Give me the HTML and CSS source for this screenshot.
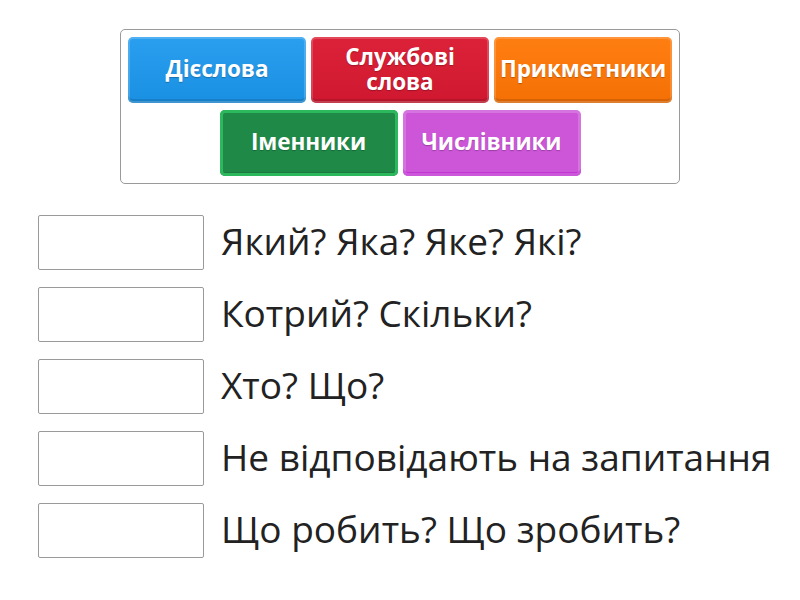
FILE: index.html
```html
<!DOCTYPE html>
<html lang="uk">
<head>
<meta charset="utf-8">
<link rel="stylesheet" href="styles.css">
</head>
<body>
<div class="bank">
  <div class="tile blue">Дієслова</div>
  <div class="tile red">Службові слова</div>
  <div class="tile orange">Прикметники</div>
  <div class="tile green">Іменники</div>
  <div class="tile purple">Числівники</div>
</div>
<div class="list">
  <div class="row"><div class="slot"></div><div class="label">Який? Яка? Яке? Які?</div></div>
  <div class="row"><div class="slot"></div><div class="label">Котрий? Скільки?</div></div>
  <div class="row"><div class="slot"></div><div class="label">Хто? Що?</div></div>
  <div class="row"><div class="slot"></div><div class="label">Не відповідають на запитання</div></div>
  <div class="row"><div class="slot"></div><div class="label">Що робить? Що зробить?</div></div>
</div>
</body>
</html>
```
FILE: styles.css
```css
html, body {
  margin: 0;
  padding: 0;
  background: #fff;
  font-family: "Open Sans", "Noto Sans", sans-serif;
}
.bank {
  box-sizing: border-box;
  width: 560px;
  margin: 29px auto 0;
  padding: 7px 0;
  border: 1px solid #9a9a9a;
  border-radius: 5px;
  display: flex;
  flex-wrap: wrap;
  justify-content: center;
  gap: 7px 5px;
}
.tile {
  box-sizing: border-box;
  width: 178px;
  height: 66px;
  border-radius: 5px;
  display: flex;
  align-items: center;
  justify-content: center;
  text-align: center;
  padding: 0 4px 3px;
  color: #fff;
  font-weight: 700;
  font-size: 22.5px;
  line-height: 25px;
  letter-spacing: -0.1px;
  text-shadow: 0 1px 1px rgba(0,0,0,0.25);
  box-shadow: inset 0 0 0 2px rgba(255,255,255,0.18), inset 0 -4px 0 rgba(0,0,0,0.12);
}
.red { padding: 0 28px 3px; }
.blue { background: linear-gradient(#2a9ff0, #1a90e2); }
.red { background: linear-gradient(#dc2238, #cf1830); }
.orange { background: linear-gradient(#ff7e12, #f47004); }
.green { background: #1f8a48; box-shadow: inset 0 0 0 3px #2cb85d, inset 0 -4px 0 rgba(0,0,0,0.12); }
.purple { background: #cc55d8; box-shadow: inset 0 0 0 3px rgba(255,255,255,0.18), inset 0 -4px 0 #c133d2; }
.list {
  margin: 31px 0 0 38px;
  display: flex;
  flex-direction: column;
  gap: 17px;
}
.row {
  display: flex;
  align-items: center;
  gap: 17px;
}
.slot {
  box-sizing: border-box;
  width: 166px;
  height: 55px;
  border: 1px solid #9a9a9a;
  border-radius: 2px;
  flex: none;
}
.label {
  font-size: 37px;
  color: #222;
  white-space: nowrap;
  padding-bottom: 4px;
}
```
